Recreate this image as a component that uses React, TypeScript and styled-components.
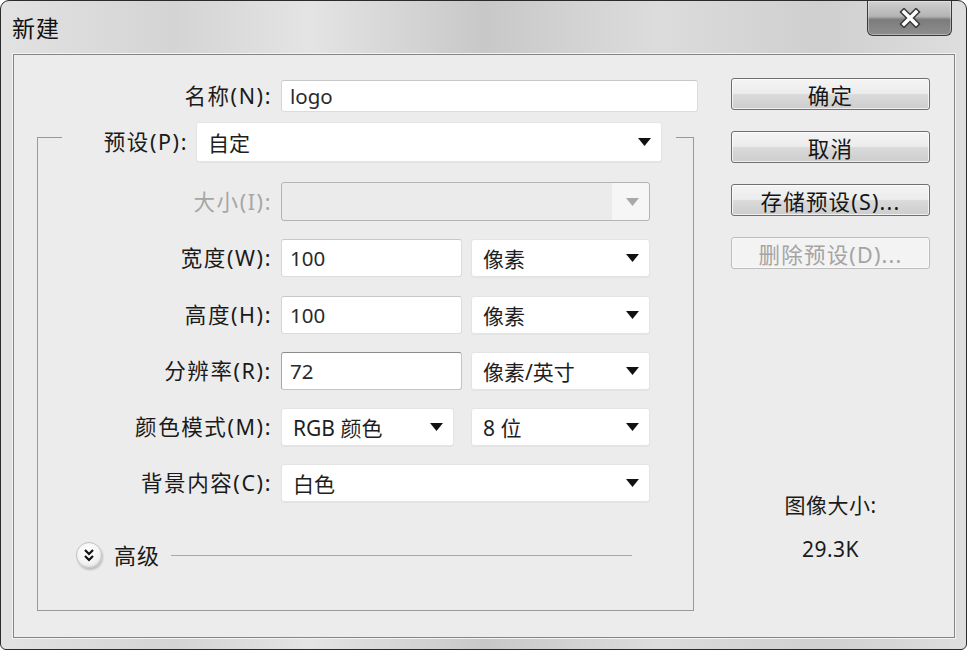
import React from 'react';
import styled, { createGlobalStyle } from 'styled-components';

const GlobalStyle = createGlobalStyle`
	html,
	body {
		margin: 0;
		padding: 0;
		background: #ffffff;
	}

	body {
		font-family: 'Noto Sans', 'Noto Sans CJK SC', sans-serif;
		color: #1a1a1a;
	}
`;

const Window = styled.div`
	width: 967px;
	height: 650px;
	box-sizing: border-box;
	border: 1px solid #2b2b2b;
	border-radius: 9px 9px 6px 6px;
	background: linear-gradient(
		90deg,
		#e2e2e2 0%,
		#d4d4d4 18%,
		#e4e4e4 32%,
		#c8c8c8 50%,
		#dcdcdc 68%,
		#cfcfcf 85%,
		#dedede 100%
	);
	display: flex;
	flex-direction: column;
	overflow: hidden;
`;

const TitleBar = styled.div`
	height: 53px;
	flex: 0 0 53px;
	display: flex;
	align-items: flex-start;
	padding-left: 11px;
`;

const Title = styled.div`
	margin-top: 14px;
	font-size: 23px;
	line-height: 26px;
	letter-spacing: 1px;
	color: #111;
`;

const CloseButton = styled.div`
	margin-left: auto;
	margin-right: 14px;
	width: 85px;
	height: 35px;
	box-sizing: border-box;
	border: 1px solid #3a3a3a;
	border-top: none;
	border-radius: 0 0 6px 6px;
	background: linear-gradient(180deg, #d0d0d0 0%, #b4b4b4 45%, #7c7c7c 55%, #8e8e8e 100%);
	box-shadow: inset 0 0 0 1px rgba(255, 255, 255, 0.35);
	display: flex;
	align-items: center;
	justify-content: center;
`;

const Client = styled.div`
	flex: 1 1 auto;
	margin: 0 11px 11px 12px;
	border: 1px solid #858585;
	box-shadow: 0 0 0 1px #f3f3f3;
	background: #ececec;
	display: flex;
`;

const LeftColumn = styled.div`
	width: 686px;
	flex: 0 0 686px;
	padding-top: 25px;
	display: flex;
	flex-direction: column;
`;

const NameRow = styled.div`
	display: grid;
	grid-template-columns: 258px 417px;
	column-gap: 9px;
	align-items: center;
`;

const Label = styled.div<{ $disabled?: boolean }>`
	text-align: right;
	font-size: 21.5px;
	line-height: 26px;
	letter-spacing: 1.6px;
	white-space: nowrap;
	color: ${p => (p.$disabled ? '#a6a6a6' : '#1a1a1a')};
`;

const TextBox = styled.div<{ $w: number; $h: number; $focused?: boolean }>`
	width: ${p => p.$w}px;
	height: ${p => p.$h}px;
	box-sizing: border-box;
	background: #ffffff;
	border: 1px solid ${p => (p.$focused ? '#c4c4c4' : '#dcdcdc')};
	border-top-color: ${p => (p.$focused ? '#8c8c8c' : '#c8c8c8')};
	border-left-color: ${p => (p.$focused ? '#a8a8a8' : '#d6d6d6')};
	border-radius: 3px;
	padding-left: 8px;
	display: flex;
	align-items: center;
	font-size: 20.5px;
	color: #2a2a2a;
`;

const Group = styled.fieldset`
	margin: 0 0 0 23px;
	width: 657px;
	box-sizing: border-box;
	min-width: 0;
	padding: 20px 0 41px;
	border: 1px solid #999999;
`;

const Legend = styled.legend`
	margin-left: 24px;
	padding: 10px 14px 0 0;
	width: 614px;
	box-sizing: border-box;
`;

const PresetRow = styled.div`
	display: grid;
	grid-template-columns: 126px 466px;
	column-gap: 8px;
	align-items: center;
`;

const Rows = styled.div`
	display: flex;
	flex-direction: column;
	gap: 18.3px;
`;

const FieldRow = styled.div`
	display: grid;
	grid-template-columns: 234px 369px;
	column-gap: 9px;
	align-items: center;
`;

const Controls = styled.div`
	display: flex;
	justify-content: space-between;
	align-items: center;
`;

const SelectBox = styled.div<{ $w: number; $h: number; $disabled?: boolean }>`
	width: ${p => p.$w}px;
	height: ${p => p.$h}px;
	box-sizing: border-box;
	border: 1px solid ${p => (p.$disabled ? '#b4b4b4' : '#e4e4e4')};
	border-radius: 3px;
	background: ${p =>
		p.$disabled ? 'linear-gradient(90deg, #ebebeb 0%, #ebebeb 90%, #f6f6f6 90%, #f6f6f6 100%)' : '#ffffff'};
	box-shadow: ${p => (p.$disabled ? 'none' : '0 1px 1px rgba(0, 0, 0, 0.04)')};
	padding: 0 10px 0 11px;
	display: flex;
	align-items: center;
	justify-content: space-between;
	font-size: 21px;
	color: #1e1e1e;
	white-space: nowrap;
`;

const Arrow = styled.svg<{ $disabled?: boolean }>`
	width: 13px;
	height: 8px;
	flex: 0 0 13px;
	fill: ${p => (p.$disabled ? '#a8a8a8' : '#111111')};
`;

const AdvancedRow = styled.div`
	margin-top: 39px;
	padding-left: 38px;
	height: 28px;
	display: flex;
	align-items: center;
`;

const ExpandIcon = styled.div`
	width: 26px;
	height: 26px;
	flex: 0 0 26px;
	box-sizing: border-box;
	border-radius: 50%;
	border: 1px solid #c2c2c2;
	background: radial-gradient(circle at 45% 35%, #ffffff 0%, #f4f4f4 55%, #d6d6d6 100%);
	box-shadow: 1px 2px 2px rgba(0, 0, 0, 0.2);
	display: flex;
	align-items: center;
	justify-content: center;
`;

const AdvancedLabel = styled.div`
	margin-left: 12px;
	font-size: 22px;
	line-height: 26px;
	letter-spacing: 1px;
	color: #1a1a1a;
`;

const AdvancedLine = styled.div`
	flex: 1 1 auto;
	height: 1px;
	margin: 0 61px 0 11px;
	background: #a8a8a8;
`;

const RightColumn = styled.div`
	width: 199px;
	padding: 23px 0 0 31px;
	display: flex;
	flex-direction: column;
`;

const Buttons = styled.div`
	display: flex;
	flex-direction: column;
	gap: 21px;
`;

const Button = styled.div<{ $disabled?: boolean }>`
	height: 32px;
	box-sizing: border-box;
	border: 1px solid ${p => (p.$disabled ? '#bdbdbd' : '#6f6f6f')};
	border-radius: 3px;
	background: ${p =>
		p.$disabled
			? '#f3f3f3'
			: 'linear-gradient(180deg, #f4f4f4 0%, #ececec 48%, #dadada 52%, #cdcdcd 100%)'};
	box-shadow: inset 0 0 0 1px ${p => (p.$disabled ? '#f8f8f8' : 'rgba(255, 255, 255, 0.7)')};
	display: flex;
	align-items: center;
	justify-content: center;
	font-size: 21.5px;
	letter-spacing: 1.2px;
	color: ${p => (p.$disabled ? '#a4a4a4' : '#151515')};
`;

const SizeInfo = styled.div`
	margin-top: 223px;
	display: flex;
	flex-direction: column;
	align-items: center;
	gap: 18px;
	font-size: 21px;
	line-height: 26px;
	letter-spacing: 0.5px;
	color: #1a1a1a;
`;

const DropArrow = ({ disabled }: { disabled?: boolean }) => (
	<Arrow
		$disabled={disabled}
		viewBox="0 0 13 8"
	>
		<polygon points="0,0 13,0 6.5,8" />
	</Arrow>
);

const Select = ({ w, h = 38, value, disabled }: { w: number; h?: number; value?: string; disabled?: boolean }) => (
	<SelectBox
		$w={w}
		$h={h}
		$disabled={disabled}
	>
		<span>{value}</span>
		<DropArrow disabled={disabled} />
	</SelectBox>
);

const App = () => {
	return (
		<>
			<GlobalStyle />
			<Window>
				<TitleBar>
					<Title>新建</Title>
					<CloseButton>
						<svg
							width="24"
							height="20"
							viewBox="0 0 24 20"
						>
							<path
								d="M6 4 L18 16 M18 4 L6 16"
								stroke="#3a3a3a"
								strokeWidth="6.5"
								strokeLinecap="square"
							/>
							<path
								d="M6 4 L18 16 M18 4 L6 16"
								stroke="#ffffff"
								strokeWidth="3.5"
								strokeLinecap="square"
							/>
						</svg>
					</CloseButton>
				</TitleBar>
				<Client>
					<LeftColumn>
						<NameRow>
							<Label>名称(N):</Label>
							<TextBox
								$w={417}
								$h={32}
							>
								logo
							</TextBox>
						</NameRow>
						<Group>
							<Legend>
								<PresetRow>
									<Label>预设(P):</Label>
									<Select
										w={466}
										h={40}
										value="自定"
									/>
								</PresetRow>
							</Legend>
							<Rows>
								<FieldRow>
									<Label $disabled>大小(I):</Label>
									<Select
										w={369}
										h={39}
										disabled
									/>
								</FieldRow>
								<FieldRow>
									<Label>宽度(W):</Label>
									<Controls>
										<TextBox
											$w={181}
											$h={38}
										>
											100
										</TextBox>
										<Select
											w={179}
											value="像素"
										/>
									</Controls>
								</FieldRow>
								<FieldRow>
									<Label>高度(H):</Label>
									<Controls>
										<TextBox
											$w={181}
											$h={38}
										>
											100
										</TextBox>
										<Select
											w={179}
											value="像素"
										/>
									</Controls>
								</FieldRow>
								<FieldRow>
									<Label>分辨率(R):</Label>
									<Controls>
										<TextBox
											$w={181}
											$h={38}
											$focused
										>
											72
										</TextBox>
										<Select
											w={179}
											value="像素/英寸"
										/>
									</Controls>
								</FieldRow>
								<FieldRow>
									<Label>颜色模式(M):</Label>
									<Controls>
										<Select
											w={173}
											value="RGB 颜色"
										/>
										<Select
											w={179}
											value="8 位"
										/>
									</Controls>
								</FieldRow>
								<FieldRow>
									<Label>背景内容(C):</Label>
									<Select
										w={369}
										value="白色"
									/>
								</FieldRow>
							</Rows>
							<AdvancedRow>
								<ExpandIcon>
									<svg
										width="12"
										height="14"
										viewBox="0 0 12 14"
									>
										<path
											d="M2 2 L6 6 L10 2 M2 8 L6 12 L10 8"
											fill="none"
											stroke="#111"
											strokeWidth="2.2"
										/>
									</svg>
								</ExpandIcon>
								<AdvancedLabel>高级</AdvancedLabel>
								<AdvancedLine />
							</AdvancedRow>
						</Group>
					</LeftColumn>
					<RightColumn>
						<Buttons>
							<Button>确定</Button>
							<Button>取消</Button>
							<Button>存储预设(S)...</Button>
							<Button $disabled>删除预设(D)...</Button>
						</Buttons>
						<SizeInfo>
							<div>图像大小:</div>
							<div>29.3K</div>
						</SizeInfo>
					</RightColumn>
				</Client>
			</Window>
		</>
	);
};

export default App;
